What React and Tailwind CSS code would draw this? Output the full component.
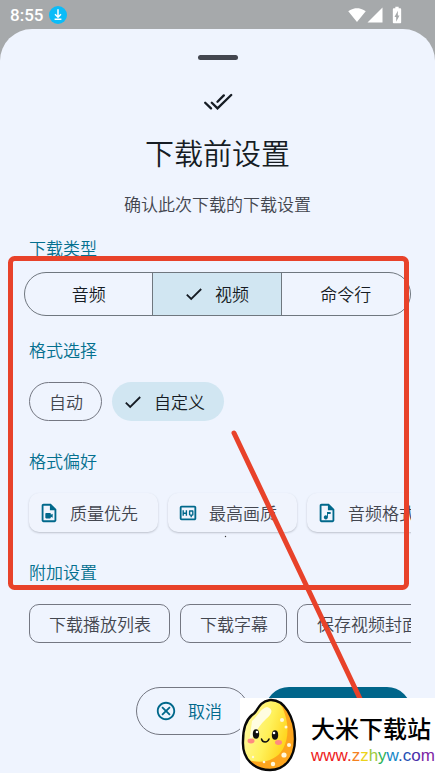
import {
  MdSignalWifi4Bar,
  MdSignalCellular4Bar,
  MdBatteryChargingFull,
  MdOutlineVideoFile,
  MdOutlineAudioFile,
  MdOutlineHighQuality,
  MdOutlineCancel,
} from "react-icons/md";

function Check() {
  return (
    <svg viewBox="0 0 18 14" className="h-[14px] w-[18px] shrink-0" fill="none" stroke="currentColor" strokeWidth="1.8" aria-hidden="true">
      <path d="M1.8 7.6 6.2 12 16.2 2" />
    </svg>
  );
}

function DoneAll() {
  return (
    <svg viewBox="0 0 30 18" className="h-[18px] w-[30px]" fill="none" stroke="currentColor" strokeWidth="2.3" strokeLinecap="round" aria-hidden="true">
      <path d="M2.2 10.7 8 16.4M8.8 10.7l5.700 5.700L28.200 3M14.500 9.800l6.300-6.400" />
    </svg>
  );
}

function StatusBar() {
  return (
    <header className="flex h-[29px] items-center justify-between pl-[10px] pr-7 text-white">
      <div className="flex items-center gap-[6px]">
        <time className="font-['Roboto',sans-serif] text-[17px] leading-6 font-medium">8:55</time>
        <svg viewBox="0 0 18 18" className="h-[18px] w-[18px]" fill="none" stroke="white" strokeWidth="1.5" aria-hidden="true">
          <circle cx="9" cy="9" r="9" fill="#0bbcf8" stroke="none" />
          <path d="M9 3.200v8M6 8.200l3 3 3-3M5.600 13.200h6.800" />
        </svg>
      </div>
      <div className="flex items-center">
        <MdSignalWifi4Bar className="h-[18px] w-[18px]" />
        <MdSignalCellular4Bar className="h-[18px] w-[18px]" />
        <MdBatteryChargingFull className="ml-[3px] h-5 w-5" />
      </div>
    </header>
  );
}

function Section({ title, children }) {
  return (
    <section>
      <h2 className="pl-[5px] text-[17px] leading-6 text-[#04708f]">{title}</h2>
      {children}
    </section>
  );
}

function ChipRow({ children }) {
  return <div className="mt-4 mb-6 flex gap-[10px] overflow-hidden py-1 pl-[5px] whitespace-nowrap">{children}</div>;
}

function OutlinedChip({ children }) {
  return (
    <button type="button" className="h-[39px] shrink-0 rounded-[10px] border border-[#747782] pr-[18px] pl-[19px] text-[17px] text-[#43464f]">
      {children}
    </button>
  );
}

function ElevatedChip({ icon: Icon, children }) {
  return (
    <button type="button" className="flex h-[39px] shrink-0 items-center gap-[10px] rounded-[10px] bg-[#f0f4fd] pr-5 pl-[9px] text-[17px] text-[#43464f] shadow-[0_1px_2px_rgba(60,65,80,0.28)]">
      <Icon className="h-[22px] w-[22px] text-[#00688b]" />
      {children}
    </button>
  );
}

function Annotation() {
  return (
    <svg className="pointer-events-none absolute top-0 left-0 h-[773px] w-[435px]" viewBox="0 0 435 773" fill="none" stroke="#e8422a" strokeWidth="5" strokeLinecap="round" aria-hidden="true">
      <rect x="10.5" y="258.500" width="396" height="329" rx="4" />
      <path d="M234 433 372 724" />
      <circle cx="225.500" cy="536.500" r="0.700" fill="#333" stroke="none" />
    </svg>
  );
}

function Mascot() {
  return (
    <svg viewBox="0 0 58 74" className="h-[74px] w-[58px] shrink-0" aria-hidden="true">
      <defs>
        <linearGradient id="grain" x1="0" y1="0.2" x2="1" y2="0.6">
          <stop offset="0" stopColor="#fffbb0" />
          <stop offset="0.5" stopColor="#fff15a" />
          <stop offset="0.8" stopColor="#ffd51f" />
        </linearGradient>
        <clipPath id="grainShape">
          <path d="M30 2C44 1 55 19 55 41 55 61 44 72 30 72 14 72 2 61 3 43 3 31 6 22 12 17 18 15 17 4 30 2Z" />
        </clipPath>
      </defs>
      <g clipPath="url(#grainShape)">
        <path d="M0 0h58v74H0z" fill="url(#grain)" />
        <path d="M39 3C49 20 50 38 43 51 36 63 22 66 8 62L18 74H58V3Z" fill="#fda51d" />
        <path d="M12 23c6-5 8-12 15-14 7 2 5 7-1 12-7 6-11 15-17 24Z" fill="#fffde0" />
        <g fill="#fff8dc">
          <circle cx="42" cy="22" r="2" />
          <circle cx="46" cy="29" r="1.500" />
          <circle cx="49" cy="47" r="2" />
          <circle cx="44" cy="57" r="2.600" />
          <circle cx="33" cy="66" r="2.200" />
          <circle cx="24" cy="64" r="1.300" />
          <circle cx="13" cy="59" r="1.200" />
        </g>
      </g>
      <path d="M30 2C44 1 55 19 55 41 55 61 44 72 30 72 14 72 2 61 3 43 3 31 6 22 12 17 18 15 17 4 30 2Z" fill="none" stroke="#080808" strokeWidth="2.400" />
      <ellipse cx="11" cy="43" rx="3.500" ry="2.400" fill="#ff8b80" />
      <ellipse cx="38.500" cy="44.500" rx="3.500" ry="2.400" fill="#ff8b80" />
      <ellipse cx="16" cy="36" rx="3.200" ry="4.700" fill="#101010" />
      <ellipse cx="35" cy="37" rx="3.200" ry="4.700" fill="#101010" />
      <circle cx="17" cy="34" r="1.300" fill="white" />
      <circle cx="34" cy="35" r="1.300" fill="white" />
      <path d="M21.500 41c1 4 6 4 7.500 0" fill="none" stroke="#101010" strokeWidth="1.500" strokeLinecap="round" />
    </svg>
  );
}

function Watermark() {
  return (
    <aside className="absolute top-[698px] left-[240px] flex h-[75px] w-[195px] items-start bg-white">
      <Mascot />
      <div className="ml-[13px] whitespace-nowrap">
        <p className="mt-3 text-[24px] leading-9 font-medium text-black">大米下载站</p>
        <p className="font-['Liberation_Sans',sans-serif] text-[17px] leading-5">
          <span className="text-[#ee1c1c]">www.</span>
          <span className="text-[#f5821f]">z</span>
          <span className="text-[#ecd31b]">z</span>
          <span className="text-[#9ccb3b]">h</span>
          <span className="text-[#2fb457]">y</span>
          <span className="text-[#1688c9]">w</span>
          <span className="text-[#2450b5]">.c</span>
          <span className="text-[#4a2fa8]">o</span>
          <span className="text-[#7d26a5]">m</span>
        </p>
      </div>
    </aside>
  );
}

export default function App() {
  return (
    <div className="relative flex min-h-screen flex-col overflow-hidden bg-[#a6a9ab] font-['Noto_Sans_CJK_SC',sans-serif] font-[350]">
      <StatusBar />
      <main className="flex-1 rounded-t-[32px] bg-[#eff4fe] px-6 pt-[26px]">
        <div className="mx-auto h-[5px] w-10 rounded-full bg-[#43464f]" />
        <div className="mt-8 flex justify-center text-[#161c24]">
          <DoneAll />
        </div>
        <h1 className="mt-6 text-center text-[29px] leading-9 font-[350] text-[#161c24]">下载前设置</h1>
        <p className="mt-[22px] mb-5 text-center text-[17px] leading-6 text-[#43464f]">确认此次下载的下载设置</p>

        <Section title="下载类型">
          <div className="mt-3 mb-[22px] grid h-11 grid-cols-3 divide-x divide-[#6f777f] overflow-hidden rounded-full border border-[#6f777f] text-[17px] text-[#161c24]">
            <button type="button" aria-pressed="false">音频</button>
            <button type="button" aria-pressed="true" className="flex items-center justify-center gap-3 bg-[#d1e6f2]">
              <Check />
              视频
            </button>
            <button type="button" aria-pressed="false">命令行</button>
          </div>
        </Section>

        <Section title="格式选择">
          <div className="mt-5 mb-7 flex gap-[10px] pl-[5px] text-[17px]">
            <button type="button" aria-pressed="false" className="h-[39px] rounded-full border border-[#747782] pr-[18px] pl-[19px] text-[#43464f]">自动</button>
            <button type="button" aria-pressed="true" className="flex h-[39px] items-center gap-3 rounded-full bg-[#d1e6f2] pr-[19px] pl-3 text-[#161c24]">
              <Check />
              自定义
            </button>
          </div>
        </Section>

        <Section title="格式偏好">
          <ChipRow>
            <ElevatedChip icon={MdOutlineVideoFile}>质量优先</ElevatedChip>
            <ElevatedChip icon={MdOutlineHighQuality}>最高画质</ElevatedChip>
            <ElevatedChip icon={MdOutlineAudioFile}>音频格式</ElevatedChip>
          </ChipRow>
        </Section>

        <Section title="附加设置">
          <ChipRow>
            <OutlinedChip>下载播放列表</OutlinedChip>
            <OutlinedChip>下载字幕</OutlinedChip>
            <OutlinedChip>保存视频封面</OutlinedChip>
          </ChipRow>
        </Section>

        <div className="mt-10 flex justify-end gap-4 pb-8 text-[17px]">
          <button type="button" className="flex h-12 items-center gap-[11px] rounded-full border border-[#747782] pr-[26px] pl-[18px] text-[#00688b]">
            <MdOutlineCancel className="h-[22px] w-[22px]" />
            取消
          </button>
          <button type="button" aria-label="开始下载" className="h-12 w-[146px] rounded-full bg-[#00658a]" />
        </div>
      </main>
      <Annotation />
      <Watermark />
    </div>
  );
}
